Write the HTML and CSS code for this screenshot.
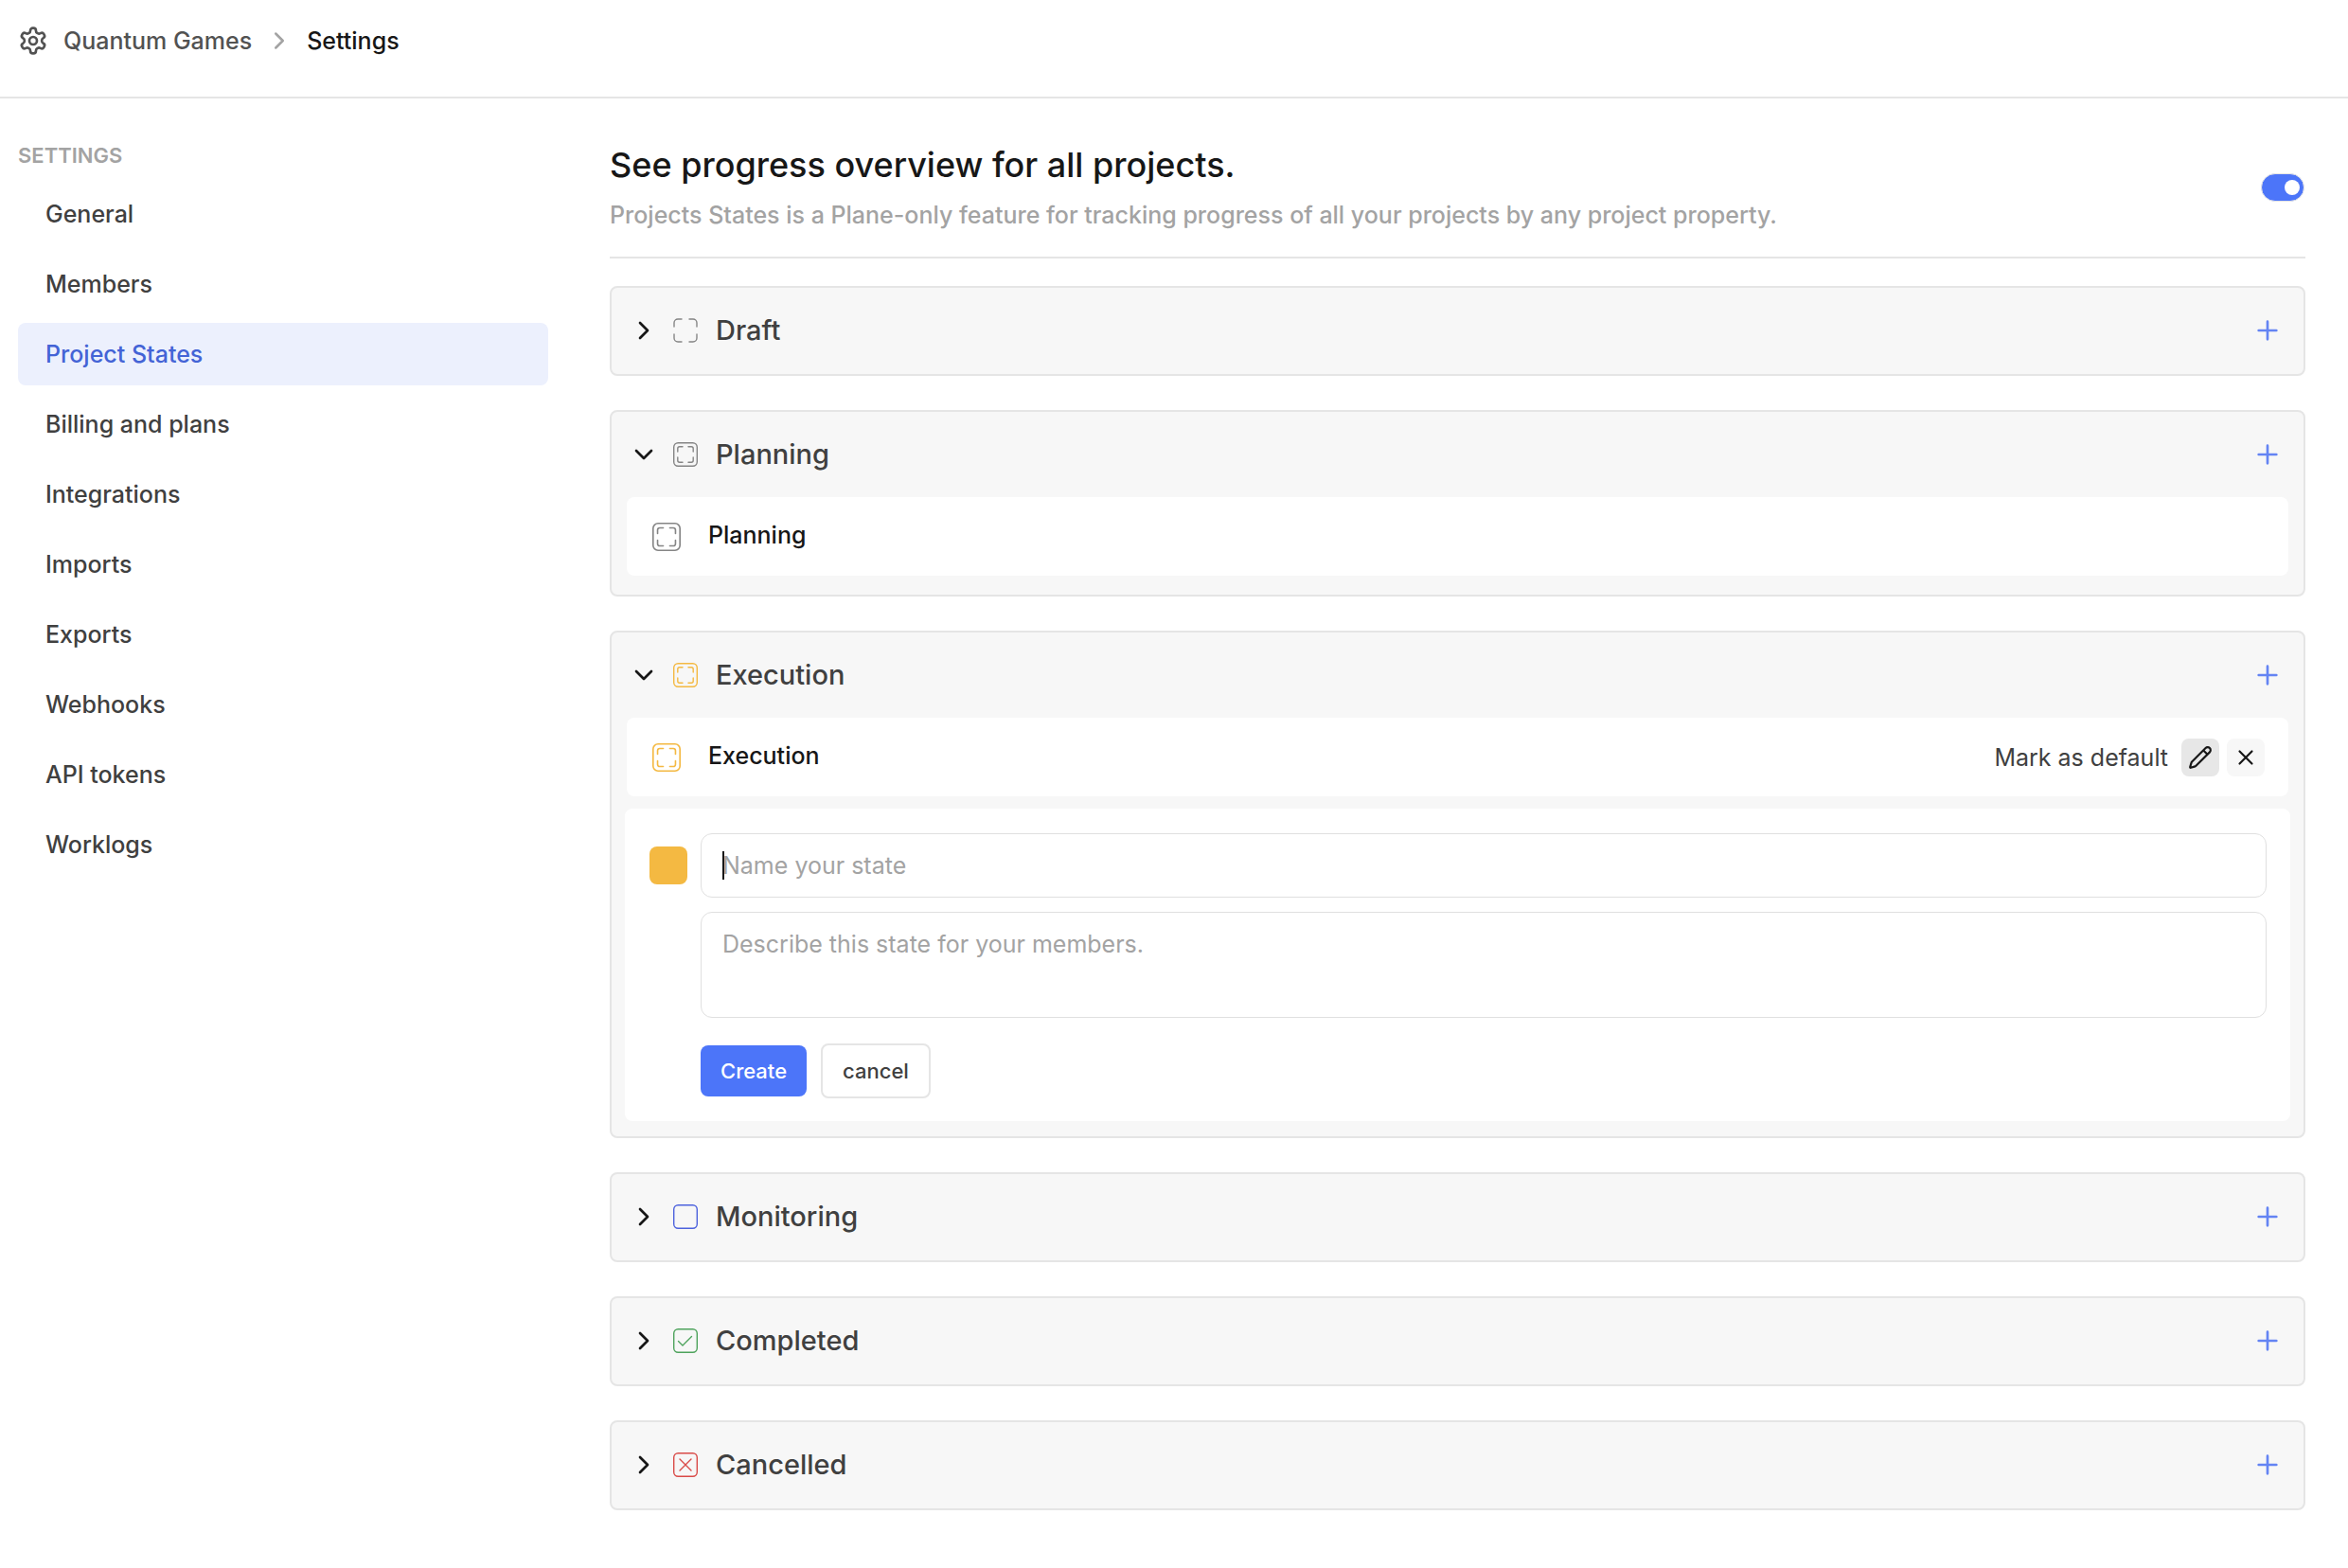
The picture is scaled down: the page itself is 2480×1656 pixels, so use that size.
FILE: index.html
```html
<!DOCTYPE html>
<html lang="en">
<head>
<meta charset="utf-8">
<title>Quantum Games - Settings</title>
<link rel="stylesheet" href="styles.css">
</head>
<body>
<svg class="sprite" aria-hidden="true">
  <symbol id="right" viewBox="0 0 24 24"><path d="m9 18 6-6-6-6"/></symbol>
  <symbol id="down" viewBox="0 0 24 24"><path d="m6 9 6 6 6-6"/></symbol>
  <symbol id="plus" viewBox="0 0 24 24"><path d="M5 12h14M12 5v14"/></symbol>
  <symbol id="draft" viewBox="0 0 26 26"><path d="M1 9V5a4 4 0 0 1 4-4h4M17 1h4a4 4 0 0 1 4 4v4M25 17v4a4 4 0 0 1-4 4h-4M9 25H5a4 4 0 0 1-4-4v-4"/></symbol>
  <symbol id="boxed" viewBox="0 0 26 26"><rect x=".7" y=".7" width="24.6" height="24.6" rx="4.5"/><path d="M4.800 10V6.800a2 2 0 0 1 2-2H10M16 4.800h3.200a2 2 0 0 1 2 2V10M21.200 16v3.200a2 2 0 0 1-2 2H16M10 21.200H6.800a2 2 0 0 1-2-2V16"/></symbol>
  <symbol id="box" viewBox="0 0 26 26"><rect x=".7" y=".7" width="24.6" height="24.6" rx="4.5"/></symbol>
  <symbol id="check" viewBox="0 0 26 26"><rect x=".7" y=".7" width="24.6" height="24.6" rx="4.5"/><path d="m5.500 13.500 4.500 4.500 9.500-9.500"/></symbol>
  <symbol id="cross" viewBox="0 0 26 26"><rect x=".7" y=".7" width="24.6" height="24.6" rx="4.5"/><path d="m7 7 12 12M19 7 7 19"/></symbol>
</svg>

<header class="topbar">
  <nav class="crumbs" aria-label="Breadcrumb">
    <svg class="gear" viewBox="0 0 24 24"><path d="M12.220 2h-.440a2 2 0 0 0-2 2v.180a2 2 0 0 1-1 1.730l-.430.250a2 2 0 0 1-2 0l-.150-.080a2 2 0 0 0-2.730.730l-.220.380a2 2 0 0 0 .730 2.730l.150.100a2 2 0 0 1 1 1.720v.510a2 2 0 0 1-1 1.740l-.150.090a2 2 0 0 0-.730 2.730l.220.380a2 2 0 0 0 2.730.730l.150-.080a2 2 0 0 1 2 0l.430.250a2 2 0 0 1 1 1.730V20a2 2 0 0 0 2 2h.440a2 2 0 0 0 2-2v-.180a2 2 0 0 1 1-1.730l.430-.250a2 2 0 0 1 2 0l.150.080a2 2 0 0 0 2.730-.730l.220-.390a2 2 0 0 0-.730-2.730l-.150-.080a2 2 0 0 1-1-1.740v-.500a2 2 0 0 1 1-1.740l.150-.090a2 2 0 0 0 .730-2.730l-.220-.380a2 2 0 0 0-2.730-.730l-.150.080a2 2 0 0 1-2 0l-.430-.250a2 2 0 0 1-1-1.730V4a2 2 0 0 0-2-2z"/><circle cx="12" cy="12" r="3"/></svg>
    <a href="#workspace">Quantum Games</a>
    <svg class="sep" viewBox="0 0 24 24"><use href="#right"/></svg>
    <a href="#settings" class="current" aria-current="page">Settings</a>
  </nav>
</header>

<div class="layout">
  <nav class="sidebar" aria-label="Settings">
    <h2 class="sidebar-title">SETTINGS</h2>
    <a href="#general">General</a>
    <a href="#members">Members</a>
    <a href="#states" class="active">Project States</a>
    <a href="#billing">Billing and plans</a>
    <a href="#integrations">Integrations</a>
    <a href="#imports">Imports</a>
    <a href="#exports">Exports</a>
    <a href="#webhooks">Webhooks</a>
    <a href="#tokens">API tokens</a>
    <a href="#worklogs">Worklogs</a>
  </nav>

  <main class="content">
    <div class="intro">
      <div>
        <h1>See progress overview for all projects.</h1>
        <p>Projects States is a Plane-only feature for tracking progress of all your projects by any project property.</p>
      </div>
      <input class="toggle" type="checkbox" role="switch" aria-label="Enable project states" checked>
    </div>

    <div class="groups">
      <section class="group">
        <div class="group-head">
          <button class="fold" aria-label="Expand"><svg><use href="#right"/></svg></button>
          <svg class="state grey"><use href="#draft"/></svg>
          <h3>Draft</h3>
          <button class="add" aria-label="Add state"><svg><use href="#plus"/></svg></button>
        </div>
      </section>

      <section class="group">
        <div class="group-head">
          <button class="fold" aria-label="Collapse"><svg><use href="#down"/></svg></button>
          <svg class="state grey"><use href="#boxed"/></svg>
          <h3>Planning</h3>
          <button class="add" aria-label="Add state"><svg><use href="#plus"/></svg></button>
        </div>
        <div class="row last">
          <svg class="state large grey"><use href="#boxed"/></svg>
          <span class="row-name">Planning</span>
        </div>
      </section>

      <section class="group">
        <div class="group-head">
          <button class="fold" aria-label="Collapse"><svg><use href="#down"/></svg></button>
          <svg class="state amber"><use href="#boxed"/></svg>
          <h3>Execution</h3>
          <button class="add" aria-label="Add state"><svg><use href="#plus"/></svg></button>
        </div>
        <div class="row">
          <svg class="state large amber"><use href="#boxed"/></svg>
          <span class="row-name">Execution</span>
          <button class="mark">Mark as default</button>
          <button class="tool pressed" aria-label="Edit"><svg viewBox="0 0 24 24"><path d="M21.174 6.812a1 1 0 0 0-3.986-3.987L3.842 16.174a2 2 0 0 0-.500.830l-1.321 4.352a.500.500 0 0 0 .623.622l4.353-1.320a2 2 0 0 0 .830-.497zM15 5l4 4"/></svg></button>
          <button class="tool" aria-label="Delete"><svg viewBox="0 0 24 24"><path d="M18 6 6 18M6 6l12 12"/></svg></button>
        </div>
        <form class="editor">
          <button type="button" class="swatch" aria-label="State colour"></button>
          <div class="fields">
            <div class="name-field">
              <input type="text" placeholder="Name your state" aria-label="State name">
              <span class="caret"></span>
            </div>
            <textarea placeholder="Describe this state for your members." aria-label="State description"></textarea>
            <div class="actions">
              <button type="button" class="create">Create</button>
              <button type="button" class="cancel">cancel</button>
            </div>
          </div>
        </form>
      </section>

      <section class="group">
        <div class="group-head">
          <button class="fold" aria-label="Expand"><svg><use href="#right"/></svg></button>
          <svg class="state blue"><use href="#box"/></svg>
          <h3>Monitoring</h3>
          <button class="add" aria-label="Add state"><svg><use href="#plus"/></svg></button>
        </div>
      </section>

      <section class="group">
        <div class="group-head">
          <button class="fold" aria-label="Expand"><svg><use href="#right"/></svg></button>
          <svg class="state green"><use href="#check"/></svg>
          <h3>Completed</h3>
          <button class="add" aria-label="Add state"><svg><use href="#plus"/></svg></button>
        </div>
      </section>

      <section class="group">
        <div class="group-head">
          <button class="fold" aria-label="Expand"><svg><use href="#right"/></svg></button>
          <svg class="state red"><use href="#cross"/></svg>
          <h3>Cancelled</h3>
          <button class="add" aria-label="Add state"><svg><use href="#plus"/></svg></button>
        </div>
      </section>
    </div>
  </main>
</div>
</body>
</html>
```
FILE: styles.css
```css
* { box-sizing: border-box; }

body {
  margin: 0;
  background: #fff;
  color: #171717;
  font: 500 25px/36px Inter, "Liberation Sans", sans-serif;
}

h1, h2, h3, p { margin: 0; }
a { color: inherit; text-decoration: none; }

button, input, textarea {
  margin: 0;
  padding: 0;
  border: 0;
  background: none;
  color: inherit;
  font: inherit;
}

svg {
  display: block;
  flex: none;
  fill: none;
  stroke: currentColor;
  stroke-width: 2;
  stroke-linecap: round;
  stroke-linejoin: round;
}

.sprite { position: absolute; width: 0; height: 0; }

/* Top bar */
.topbar {
  height: 104px;
  padding: 25px 19px 0;
  border-bottom: 2px solid #e5e5e5;
}
.crumbs { display: flex; align-items: center; color: #525252; }
.gear { width: 32px; height: 32px; margin-right: 16px; }
.sep { width: 30px; height: 30px; margin: 0 14px; color: #a3a3a3; }
.crumbs .current { color: #171717; }

.layout { display: flex; align-items: flex-start; }

/* Sidebar */
.sidebar {
  display: flex;
  flex: none;
  flex-direction: column;
  gap: 8px;
  width: 644px;
  padding: 45px 65px 0 19px;
  color: #404040;
}
.sidebar-title {
  color: #a3a3a3;
  font-size: 22px;
  font-weight: 600;
  line-height: 30px;
  margin-bottom: 6px;
}
.sidebar a { padding: 15px 29px; border-radius: 8px; }
.sidebar .active { background: #ecf0fd; color: #4363d6; }

/* Content */
.content { flex: 1; min-width: 0; padding: 46px 45px 61px 0; }

.intro {
  display: flex;
  align-items: center;
  justify-content: space-between;
  padding-bottom: 26px;
  border-bottom: 2px solid #e5e5e5;
}
.intro h1 { font-size: 36px; font-weight: 500; line-height: 48px; margin-bottom: 11px; }
.intro p { color: #a3a3a3; }

.toggle {
  appearance: none;
  display: flex;
  align-items: center;
  justify-content: flex-end;
  width: 46px;
  height: 30px;
  margin-right: 1px;
  padding-right: 4px;
  border: 1px solid #e5e5e5;
  border-radius: 15px;
  background: #4c75f9;
}
.toggle::before { content: ""; width: 16px; height: 16px; border-radius: 8px; background: #fff; }

.groups { display: flex; flex-direction: column; gap: 36px; padding-top: 29px; }
.group { padding-bottom: 1px; border: 2px solid #e5e5e5; border-radius: 8px; background: #f7f7f7; }
.group-head {
  display: flex;
  align-items: center;
  height: 90px;
  padding: 0 22px 0 18px;
}
.group h3 { flex: 1; color: #404040; font-size: 29px; font-weight: 500; line-height: 40px; }
.fold, .fold svg, .add, .add svg { width: 32px; height: 32px; }
.fold { margin-right: 15px; }
.add { color: #6484f3; }

.state { width: 26px; height: 26px; margin-right: 19px; stroke-width: 1.4; }
.state.large { width: 30px; height: 30px; margin-right: 29px; }
.grey { color: #858585; }
.amber { color: #f4b942; }
.blue { color: #4d62dd; }
.green { color: #4ea35c; }
.red { color: #d94b48; }

.row {
  display: flex;
  align-items: center;
  height: 83px;
  margin: 0 16px;
  padding: 0 25px 0 27px;
  border-radius: 8px;
  background: #fff;
}
.row.last { margin-bottom: 19px; }
.row-name { flex: 1; padding-bottom: 4px; }
.mark { color: #404040; font-weight: 400; margin-right: 14px; }
.tool {
  display: flex;
  align-items: center;
  justify-content: center;
  width: 40px;
  height: 40px;
  border-radius: 8px;
  background: #f7f7f7;
}
.tool svg { width: 26px; height: 26px; }
.tool.pressed { margin-right: 8px; background: #e7e7e7; }

/* New state form */
.editor {
  display: flex;
  gap: 14px;
  margin: 13px 14px 15px;
  padding: 26px 25px 24px 26px;
  border-radius: 8px;
  background: #fff;
}
.swatch { flex: none; width: 40px; height: 40px; margin-top: 14px; border-radius: 8px; background: #f4b942; }
.fields { flex: 1; min-width: 0; }
.name-field { position: relative; margin-bottom: 15px; }
.fields input, .fields textarea {
  display: block;
  width: 100%;
  padding: 0 22px;
  border: 1px solid #e0e0e0;
  border-radius: 12px;
  font-weight: 400;
}
.fields input { height: 68px; }
.fields textarea { height: 112px; padding-top: 15px; resize: none; }
::placeholder { color: #a3a3a3; opacity: 1; }
.caret { position: absolute; top: 19px; left: 23px; width: 2px; height: 30px; background: #171717; }

.actions { display: flex; align-items: center; gap: 15px; margin-top: 27px; }
.actions button { padding: 0 21px; border-radius: 8px; font-size: 22px; line-height: 54px; }
.actions .create { background: #4c75f9; color: #fff; }
.actions .cancel { border: 2px solid #e5e5e5; color: #404040; }
```
